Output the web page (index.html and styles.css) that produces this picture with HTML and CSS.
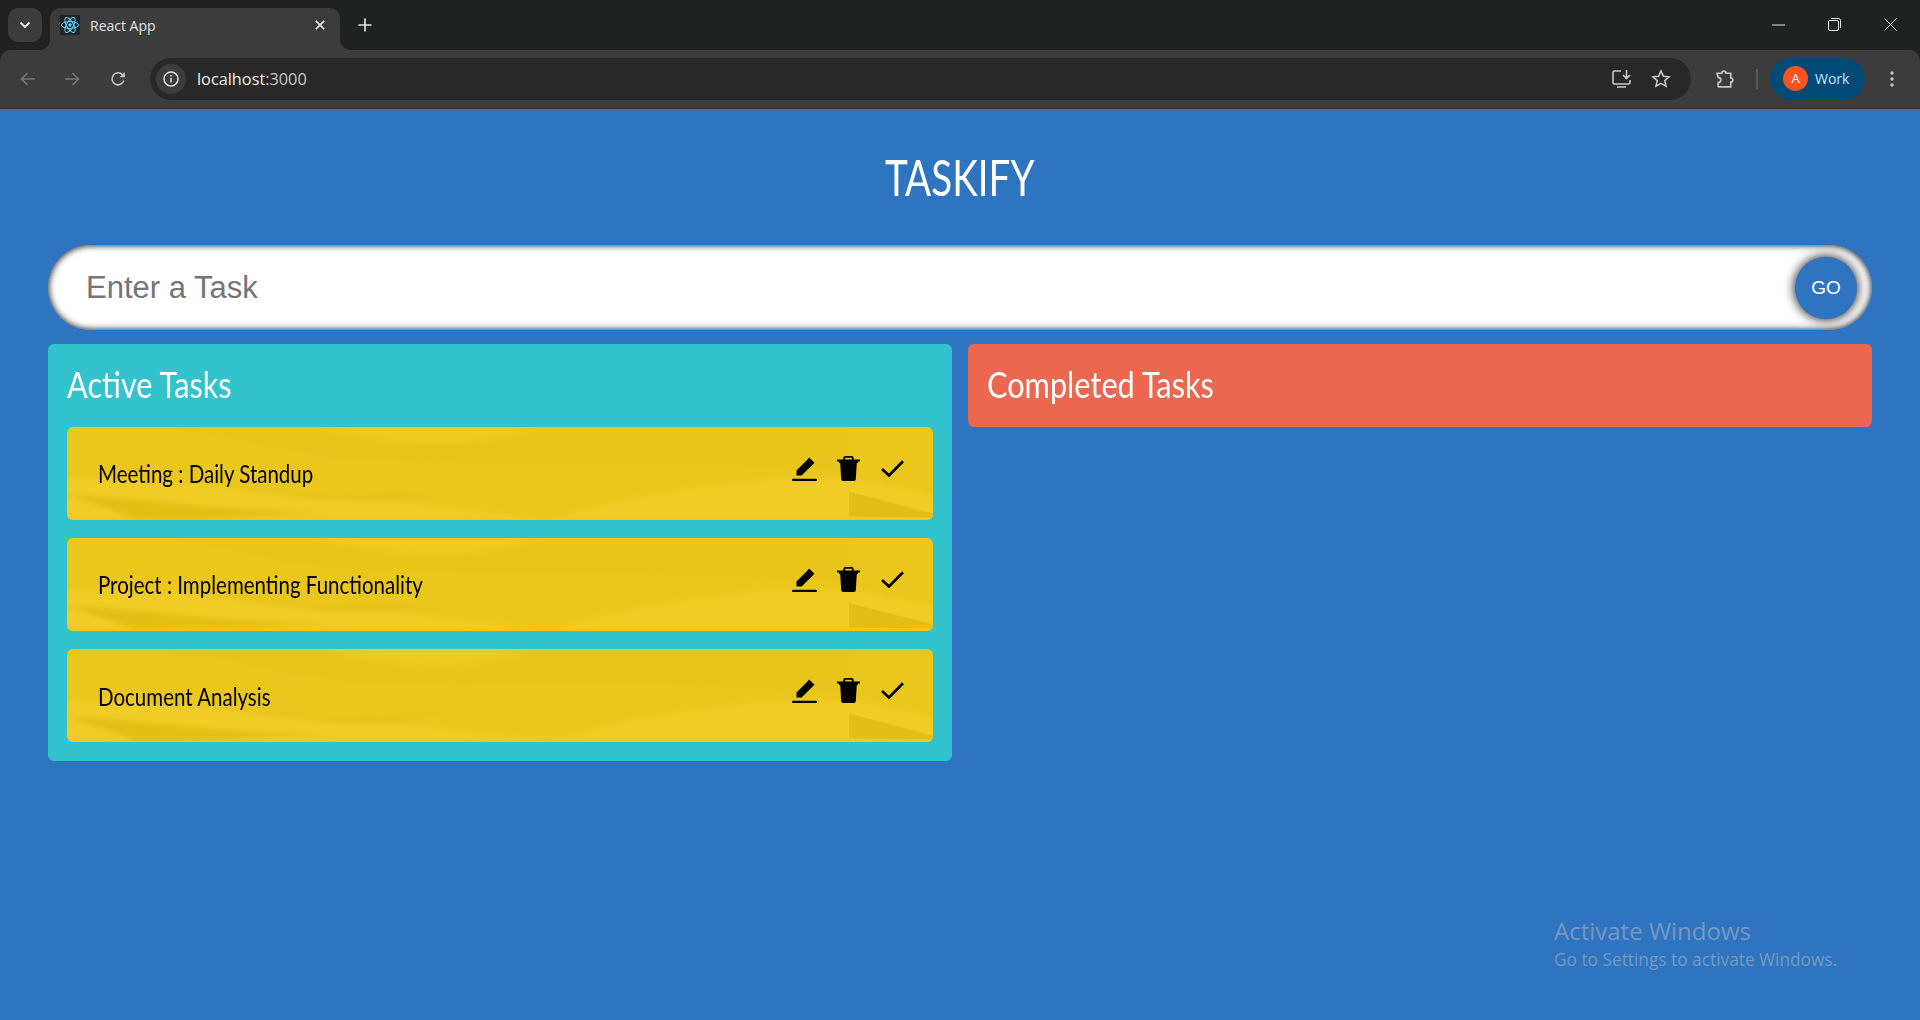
FILE: index.html
```html
<!DOCTYPE html>
<html lang="en">

<head>
  <meta charset="UTF-8">
  <title>React App</title>
  <link rel="stylesheet" href="styles.css">
</head>

<body>
  <svg class="defs" width="0" height="0">
    <filter id="soft" x="-5%" y="-20%" width="110%" height="140%">
      <feGaussianBlur stdDeviation="2.500" />
    </filter>
    <symbol id="paper" viewBox="0 0 866 93" preserveAspectRatio="none">
      <g filter="url(#soft)">
        <path fill="#e9c51c" d="M100 0 C170 20 230 35 330 40 C480 44 600 36 782 50 L782 0 Z" />
        <path fill="#f0cc25" d="M0 52 C60 50 120 55 190 66 C300 72 400 82 480 93 L0 93 Z" />
        <path fill="#eecb22" d="M250 0 C330 18 400 24 470 0 Z" />
        <path fill="#f0cc25" d="M480 93 C560 70 680 48 782 52 L866 68 L866 93 Z" />
        <path fill="#e4bf17" d="M0 68 C40 70 90 74 140 80 C190 84 230 86 270 85 C200 90 120 93 70 93 C50 85 20 75 0 68 Z" />
        <path fill="#e7c21a" d="M146 56 C220 68 300 72 380 62 C330 82 230 76 146 56 Z" />
      </g>
      <path fill="#e3be16" d="M782 65 L866 87 L866 91 L782 90 Z" />
    </symbol>
    <symbol id="icon-edit" viewBox="0 0 25 25">
      <path d="M4.500 14.500 15.500 3.500l1.600-2 5.400 5.300-1.800 1.800L9.600 19.400H4.500Z" />
      <rect x="0" y="22.700" width="25" height="2.300" rx="1" />
    </symbol>
    <symbol id="icon-trash" viewBox="0 0 23 25">
      <path d="M2 5.200h19v1.800h-1.200l-1 16c0 1.100-.8 2-2 2H6.200c-1.100 0-1.900-.9-2-2L3.200 7H2ZM0 3.600h6.300V2c0-1.100.9-2 2-2h6.400c1.100 0 2 .9 2 2v1.600H23v1.900H0Zm8.200 0h6.600V1.800H8.200Z" />
    </symbol>
    <symbol id="icon-check" viewBox="0 0 23 17">
      <path d="M1 9 8 15.500 22 1.200" fill="none" stroke="#000" stroke-width="2.700" />
    </symbol>
  </svg>

  <div class="chrome">
    <div class="tab-strip">
      <div class="tab-search">
        <svg width="12" height="8" viewBox="0 0 12 8"><path d="M1.500 1.500 6 6l4.500-4.500" fill="none" stroke="#e3e3e3" stroke-width="2" /></svg>
      </div>
      <div class="tab">
        <span class="favicon">
          <svg width="20" height="20" viewBox="0 0 20 20" fill="none" stroke="#61dafb" stroke-width="1">
            <ellipse cx="10" cy="10" rx="8.500" ry="3.400" />
            <ellipse cx="10" cy="10" rx="8.500" ry="3.400" transform="rotate(60 10 10)" />
            <ellipse cx="10" cy="10" rx="8.500" ry="3.400" transform="rotate(120 10 10)" />
            <circle cx="10" cy="10" r="1.700" fill="#61dafb" stroke="none" />
          </svg>
        </span>
        <span class="tab-title">React App</span>
        <svg class="tab-close" width="10" height="10" viewBox="0 0 10 10"><path d="M.8.800l8.400 8.400M9.200.800.800 9.200" stroke="#e3e3e3" stroke-width="1.700" /></svg>
      </div>
      <svg class="new-tab" width="14" height="14" viewBox="0 0 14 14"><path d="M7 .5v13M.5 7h13" stroke="#e3e3e3" stroke-width="1.700" /></svg>
      <div class="window-controls">
        <svg width="13" height="2" viewBox="0 0 13 2"><path d="M0 1h13" stroke="#e6e6e6" stroke-width="1" /></svg>
        <svg width="13" height="13" viewBox="0 0 13 13" fill="none" stroke="#e6e6e6"><rect x=".5" y="2.500" width="10" height="10" rx="1.500" /><path d="M3 .5h7.500a2 2 0 0 1 2 2V10" /></svg>
        <svg width="13" height="13" viewBox="0 0 13 13"><path d="M.5.500l12 12M12.500.500l-12 12" stroke="#e6e6e6" /></svg>
      </div>
    </div>
    <div class="toolbar">
      <svg class="nav-icon" width="16" height="14" viewBox="0 0 16 14" fill="none" stroke="#757575" stroke-width="1.600"><path d="M15 7H1.500M7.500 1 1.500 7l6 6" /></svg>
      <svg class="nav-icon" width="16" height="14" viewBox="0 0 16 14" fill="none" stroke="#757575" stroke-width="1.600"><path d="M1 7h13.500M8.500 1l6 6-6 6" /></svg>
      <svg class="nav-icon nav-reload" width="16" height="16" viewBox="0 0 16 16" fill="none" stroke="#c7c7c7" stroke-width="1.600"><path d="M13.800 9.500A6 6 0 1 1 12.500 3.800L14.500 5.800" /><path d="M14.800 1v5.200H9.600" fill="#c7c7c7" stroke="none" /></svg>
      <div class="address-bar">
        <span class="site-info">
          <svg width="16" height="16" viewBox="0 0 16 16" fill="none" stroke="#e3e3e3" stroke-width="1.500"><circle cx="8" cy="8" r="7" /><path d="M8 7v4.500M8 4v1.600" /></svg>
        </span>
        <span class="url">localhost<span class="url-port">:3000</span></span>
        <svg class="address-icon" width="21" height="20" viewBox="0 0 21 20" fill="none" stroke="#c7c7c7" stroke-width="1.600"><path d="M9 2H2.500A1.500 1.500 0 0 0 1 3.500v10A1.500 1.500 0 0 0 2.500 15h14a1.500 1.500 0 0 0 1.500-1.500V11M5 18h9M14.500 1v8M11 6l3.500 3.500L18 6" /></svg>
        <svg class="address-icon" width="20" height="19" viewBox="0 0 20 19" fill="none" stroke="#c7c7c7" stroke-width="1.600"><path d="m10 2 2.400 5.200 5.600.6-4.200 3.800 1.200 5.600-5-2.900-5 2.900 1.200-5.600L2 7.800l5.600-.6Z" /></svg>
      </div>
      <svg class="extension" width="21" height="21" viewBox="0 0 20 20" fill="none" stroke="#c7c7c7" stroke-width="1.600"><path d="M2 5h4.500a2 2 0 0 1 4 0H15v4.500a2 2 0 0 1 0 4V18H3.500l-.5-.5V14a2.500 2.500 0 0 0 0-5Z" /></svg>
      <span class="toolbar-sep"></span>
      <div class="profile">
        <span class="avatar">A</span>
        <span>Work</span>
      </div>
      <svg class="menu-dots" width="4" height="16" viewBox="0 0 4 16" fill="#c7c7c7"><circle cx="2" cy="2" r="1.700" /><circle cx="2" cy="8" r="1.700" /><circle cx="2" cy="14" r="1.700" /></svg>
    </div>
  </div>

  <div class="app">
    <h1 class="heading">TASKIFY</h1>

    <form class="task-form">
      <input class="task-input" type="text" placeholder="Enter a Task" />
      <button class="task-submit" type="button">GO</button>
    </form>

    <div class="columns">
      <div class="panel panel-active">
        <h2 class="panel-heading">Active Tasks</h2>
        <div class="task-list">
          <div class="task">
            <svg class="task-paper"><use href="#paper" /></svg>
            <span class="task-text">Meeting : Daily Standup</span>
            <div class="task-actions">
              <svg class="icon-edit"><use href="#icon-edit" /></svg>
              <svg class="icon-trash"><use href="#icon-trash" /></svg>
              <svg class="icon-check"><use href="#icon-check" /></svg>
            </div>
          </div>
          <div class="task">
            <svg class="task-paper"><use href="#paper" /></svg>
            <span class="task-text">Project : Implementing Functionality</span>
            <div class="task-actions">
              <svg class="icon-edit"><use href="#icon-edit" /></svg>
              <svg class="icon-trash"><use href="#icon-trash" /></svg>
              <svg class="icon-check"><use href="#icon-check" /></svg>
            </div>
          </div>
          <div class="task">
            <svg class="task-paper"><use href="#paper" /></svg>
            <span class="task-text">Document Analysis</span>
            <div class="task-actions">
              <svg class="icon-edit"><use href="#icon-edit" /></svg>
              <svg class="icon-trash"><use href="#icon-trash" /></svg>
              <svg class="icon-check"><use href="#icon-check" /></svg>
            </div>
          </div>
        </div>
      </div>
      <div class="panel panel-completed">
        <h2 class="panel-heading">Completed Tasks</h2>
      </div>
    </div>

    <div class="activate">
      <div class="activate-title">Activate Windows</div>
      <div class="activate-text">Go to Settings to activate Windows.</div>
    </div>
  </div>
</body>

</html>
```

FILE: styles.css
```css
* {
  box-sizing: border-box;
}

body {
  margin: 0;
  height: 1020px;
  overflow: hidden;
  background-color: #2f74c0;
  font-family: "Liberation Sans", Arial, sans-serif;
}

.defs {
  display: block;
  height: 0;
}

/* browser window */
.chrome {
  background-color: #202221;
  font-family: "Open Sans", "Noto Sans", sans-serif;
}

.tab-strip {
  display: flex;
  align-items: flex-start;
  height: 50px;
  padding: 8px 0 0 8px;
}

.tab-search {
  display: flex;
  align-items: center;
  justify-content: center;
  width: 34px;
  height: 34px;
  border-radius: 10px;
  background-color: #3c3c3c;
}

.tab {
  position: relative;
  display: flex;
  align-items: center;
  width: 290px;
  height: 42px;
  margin-left: 8px;
  padding: 0 15px 8px 10px;
  border-radius: 10px 10px 0 0;
  background-color: #3c3c3c;
}

.tab::before,
.tab::after {
  content: "";
  position: absolute;
  bottom: 0;
  width: 10px;
  height: 10px;
}

.tab::before {
  left: -10px;
  background: radial-gradient(circle at 0 0, #202221 9.500px, #3c3c3c 10px);
}

.tab::after {
  right: -10px;
  background: radial-gradient(circle at 100% 0, #202221 9.500px, #3c3c3c 10px);
}

.favicon {
  display: flex;
  width: 20px;
  height: 20px;
  background-color: #20232a;
}

.tab-title {
  flex: 1;
  margin-left: 10px;
  font-size: 14px;
  color: #e3e3e3;
}

.new-tab {
  margin: 10px 0 0 18px;
}

.window-controls {
  display: flex;
  align-items: center;
  gap: 43px;
  margin-left: auto;
  padding: 10px 23px 0 0;
}

.toolbar {
  display: flex;
  align-items: center;
  height: 59px;
  padding: 0 0 1px 20px;
  border-radius: 10px 10px 0 0;
  border-bottom: 1px solid #303030;
  background-color: #3c3c3c;
}

.nav-icon {
  margin-right: 28px;
  flex: none;
}

.nav-reload {
  margin-left: 2px;
}

.address-bar {
  display: flex;
  align-items: center;
  width: 1541px;
  height: 42px;
  margin-left: -4px;
  padding: 0 11px 0 6px;
  border-radius: 21px;
  background-color: #282828;
}

.site-info {
  display: flex;
  align-items: center;
  justify-content: center;
  width: 30px;
  height: 30px;
  border-radius: 50%;
  background-color: #3c3c3c;
}

.url {
  flex: 1;
  margin-left: 11px;
  font-size: 16.300px;
  color: #f0f0f0;
}

.url-port {
  color: #c7c7c7;
}

.address-icon {
  margin: 0 9px;
}

.extension {
  margin-left: 24px;
}

.toolbar-sep {
  width: 2px;
  height: 20px;
  margin-left: 20px;
  background-color: #5a5a5a;
}

.profile {
  display: flex;
  align-items: center;
  width: 95px;
  height: 42px;
  margin-left: 12px;
  padding-left: 13px;
  border-radius: 21px;
  background-color: #004a77;
  font-size: 14px;
  color: #c2e7ff;
}

.avatar {
  width: 25px;
  height: 25px;
  margin-right: 7px;
  border-radius: 50%;
  background-color: #fb5420;
  color: #fff;
  font-size: 13px;
  line-height: 25px;
  text-align: center;
}

.menu-dots {
  margin-left: 25px;
}

/* taskify */
.app {
  position: relative;
  display: flex;
  flex-direction: column;
  align-items: center;
  height: 911px;
  padding-top: 42px;
}

.heading {
  margin: 0 0 42px;
  font-family: Lato, "Liberation Sans", sans-serif;
  font-size: 51px;
  font-weight: 400;
  line-height: 52px;
  color: #fff;
  transform: scaleX(0.757);
}

.task-form {
  position: relative;
  width: 95%;
}

.task-input {
  display: block;
  width: 100%;
  height: 85px;
  padding: 0 38px;
  border: none;
  border-radius: 50px;
  font-family: "Liberation Sans", Arial, sans-serif;
  font-size: 31px;
  box-shadow: inset 0 0 7px #000;
}

.task-submit {
  position: absolute;
  top: 12px;
  right: 15px;
  width: 62px;
  height: 62px;
  border: none;
  border-radius: 50%;
  background-color: #2f74c0;
  color: #fff;
  font-family: "Liberation Sans", Arial, sans-serif;
  font-size: 19px;
  box-shadow: 0 0 12px #000;
}

.columns {
  display: flex;
  align-items: flex-start;
  gap: 16px;
  width: 95%;
  margin-top: 14px;
}

.panel {
  flex: 1;
  padding: 19px 19px 0;
  border-radius: 6px;
}

.panel-active {
  background-color: #32c3cd;
}

.panel-completed {
  background-color: #eb6750;
}

.panel-heading {
  margin: 0 0 23px;
  font-family: Lato, "Liberation Sans", sans-serif;
  font-size: 37px;
  font-weight: 400;
  line-height: 41px;
  color: #fff;
  transform: scaleX(0.83);
  transform-origin: left;
}

.task-list {
  display: flex;
  flex-direction: column;
  gap: 18.700px;
  padding-bottom: 19px;
}

.task {
  position: relative;
  display: flex;
  align-items: center;
  justify-content: space-between;
  height: 92.500px;
  padding: 0 29px 0 31px;
  border-radius: 6px;
  overflow: hidden;
  background-color: #ebc71d;
}

.task-paper {
  position: absolute;
  top: 0;
  left: 0;
  width: 100%;
  height: 100%;
}

.task-text {
  position: relative;
  font-family: Lato, "Liberation Sans", sans-serif;
  font-size: 25px;
  color: #000;
  transform: scaleX(0.82);
  transform-origin: left;
}

.task-actions {
  position: relative;
  display: flex;
  align-items: center;
  padding-bottom: 10px;
}

.icon-edit {
  width: 25px;
  height: 25px;
}

.icon-trash {
  width: 23px;
  height: 25px;
  margin-left: 20px;
}

.icon-check {
  width: 23px;
  height: 17px;
  margin-left: 21px;
}

.activate {
  position: absolute;
  top: 806px;
  left: 1554px;
  font-family: "Open Sans", "Noto Sans", sans-serif;
  color: rgba(190, 190, 190, 0.5);
}

.activate-title {
  font-size: 24px;
  line-height: 32px;
}

.activate-text {
  font-size: 17.300px;
  line-height: 26px;
}
```
